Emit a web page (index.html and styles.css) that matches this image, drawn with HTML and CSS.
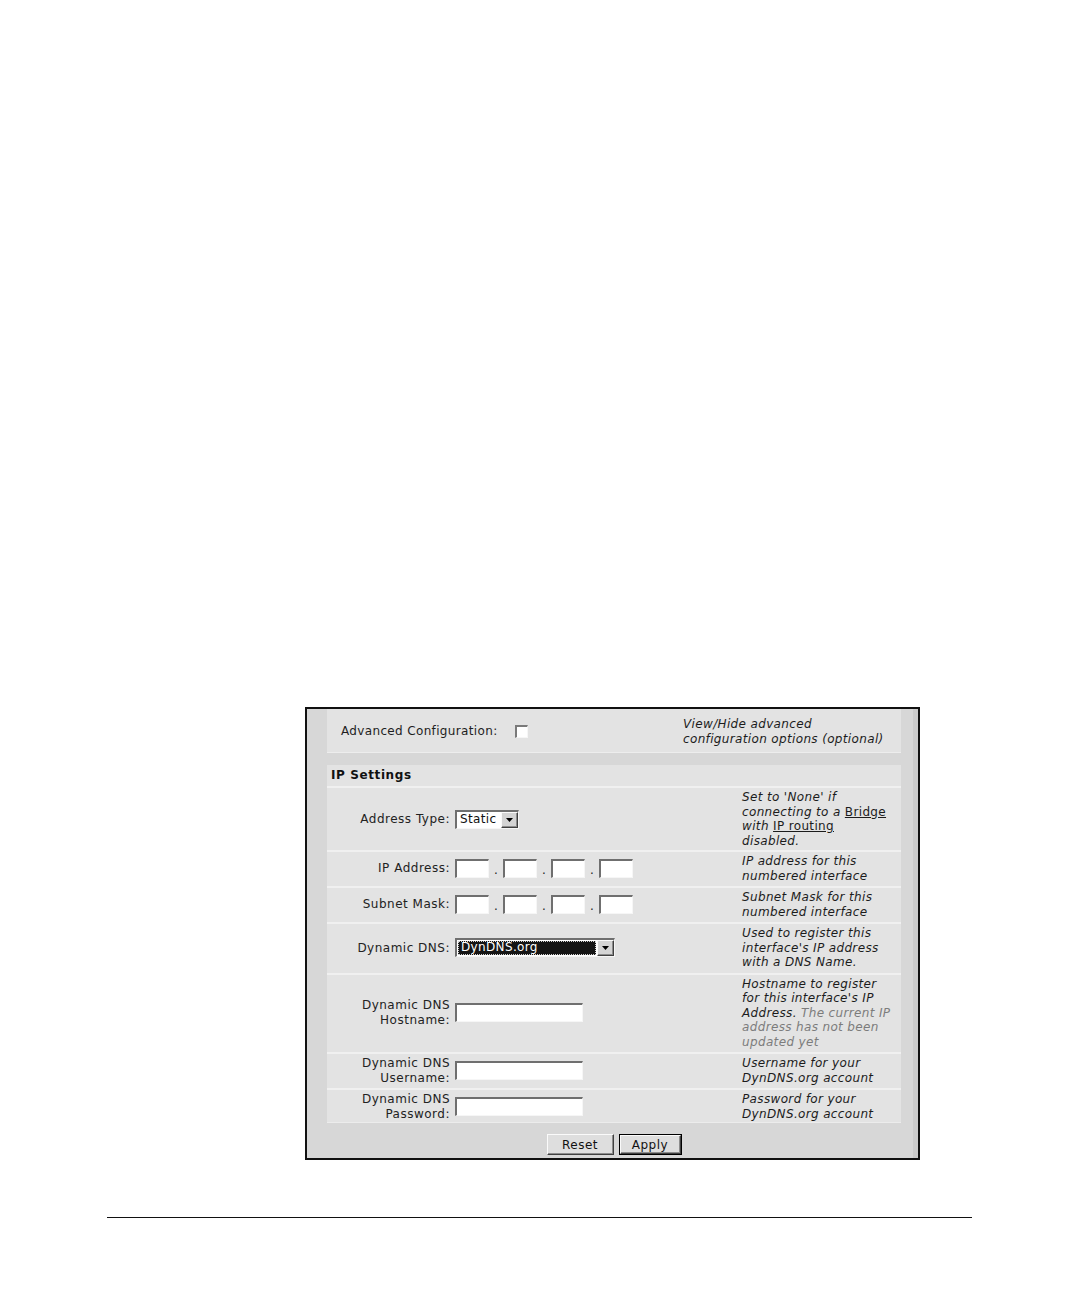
FILE: index.html
```html
<!DOCTYPE html>
<html>
<head>
<meta charset="utf-8">
<link rel="stylesheet" href="styles.css">
</head>
<body>
<div class="page">
  <div class="shot">
    <div class="box adv">
      <div class="adv-left">
        <span>Advanced Configuration:</span>
        <span class="chk"></span>
      </div>
      <div class="desc">View/Hide advanced<br>configuration options (optional)</div>
    </div>

    <div class="box ip">
      <div class="hdr">IP Settings</div>

      <div class="row first">
        <div class="lbl">Address Type:</div>
        <div class="fld">
          <span class="sel sel-at"><span class="sel-val">Static</span><span class="sel-btn"><svg width="7" height="4" viewBox="0 0 7 4"><path d="M0 0h7L3.5 4z" fill="#000"/></svg></span></span>
        </div>
        <div class="desc">Set to 'None' if<br>connecting to a <span class="lnk">Bridge</span><br>with <span class="lnk">IP routing</span><br>disabled.</div>
      </div>

      <div class="row">
        <div class="lbl">IP Address:</div>
        <div class="fld">
          <span class="inp oct"></span><span class="dot">.</span><span class="inp oct"></span><span class="dot">.</span><span class="inp oct"></span><span class="dot">.</span><span class="inp oct"></span>
        </div>
        <div class="desc">IP address for this<br>numbered interface</div>
      </div>

      <div class="row">
        <div class="lbl">Subnet Mask:</div>
        <div class="fld">
          <span class="inp oct"></span><span class="dot">.</span><span class="inp oct"></span><span class="dot">.</span><span class="inp oct"></span><span class="dot">.</span><span class="inp oct"></span>
        </div>
        <div class="desc">Subnet Mask for this<br>numbered interface</div>
      </div>

      <div class="row">
        <div class="lbl">Dynamic DNS:</div>
        <div class="fld">
          <span class="sel sel-dns"><span class="sel-val hl">DynDNS.org</span><span class="sel-btn"><svg width="7" height="4" viewBox="0 0 7 4"><path d="M0 0h7L3.5 4z" fill="#000"/></svg></span></span>
        </div>
        <div class="desc">Used to register this<br>interface's IP address<br>with a DNS Name.</div>
      </div>

      <div class="row">
        <div class="lbl">Dynamic DNS<br>Hostname:</div>
        <div class="fld"><span class="inp txt"></span></div>
        <div class="desc">Hostname to register<br>for this interface's IP<br>Address. <span class="muted">The current IP<br>address has not been<br>updated yet</span></div>
      </div>

      <div class="row">
        <div class="lbl">Dynamic DNS<br>Username:</div>
        <div class="fld"><span class="inp txt"></span></div>
        <div class="desc">Username for your<br>DynDNS.org account</div>
      </div>

      <div class="row last">
        <div class="lbl">Dynamic DNS<br>Password:</div>
        <div class="fld"><span class="inp txt"></span></div>
        <div class="desc">Password for your<br>DynDNS.org account</div>
      </div>
    </div>

    <div class="actions">
      <button class="btn reset">Reset</button>
      <button class="btn apply"><span class="btn-in">Apply</span></button>
    </div>
  </div>
  <div class="rule"></div>
</div>
</body>
</html>
```

FILE: styles.css
```css
* { box-sizing: border-box; }

body {
  margin: 0;
  background: #fff;
  font-family: "DejaVu Sans", Verdana, sans-serif;
  font-size: 12px;
  letter-spacing: 0.35px;
  color: #1e1e1e;
}

.page {
  padding-top: 707px;
  height: 1296px;
  overflow: hidden;
}

.shot {
  margin-left: 305px;
  width: 615px;
  height: 453px;
  border: 2px solid #111;
  background: linear-gradient(to left, #cbcbcb 5px, #d7d7d7 5px);
  padding: 0 17px 0 20px;
  display: flex;
  flex-direction: column;
}

.box {
  background: #e3e3e3;
}

.adv {
  height: 44px;
  padding-top: 2px;
  border-bottom: 1px solid #ededed;
  display: grid;
  grid-template-columns: 356px 1fr;
  align-items: center;
  line-height: 14.5px;
}

.adv-left {
  padding-left: 14px;
  display: flex;
  align-items: center;
}

.chk {
  display: inline-block;
  width: 13px;
  height: 13px;
  margin-left: 17px;
  background: #fff;
  border-top: 2px solid #7a7a7a;
  border-left: 2px solid #7a7a7a;
  border-right: 1px solid #f6f6f6;
  border-bottom: 1px solid #f6f6f6;
}

.ip {
  margin-top: 12px;
  border-bottom: 1px solid #ececec;
}

.hdr {
  height: 21px;
  line-height: 21px;
  padding-left: 4px;
  font-weight: bold;
  letter-spacing: 0.6px;
  color: #111;
}

.row {
  display: grid;
  grid-template-columns: 128px 287px 159px;
  align-items: center;
  border-top: 2px solid #f0f0f0;
  padding: 2px 0 3px;
  line-height: 14.5px;
}

.row.first { padding-bottom: 2px; }
.row.last { padding-bottom: 1px; }

.lbl {
  text-align: right;
  padding-right: 5px;
  letter-spacing: 0.5px;
  color: #222;
}

.fld {
  display: flex;
  align-items: center;
}

.desc {
  font-style: italic;
  white-space: nowrap;
  color: #1c1c1c;
}

.lnk {
  font-style: normal;
  text-decoration: underline;
}

.muted {
  color: #7c7c7c;
}

.inp,
.sel {
  display: inline-flex;
  background: #fff;
  border-top: 2px solid #6f6f6f;
  border-left: 2px solid #6f6f6f;
  border-right: 1px solid #f6f6f6;
  border-bottom: 1px solid #f6f6f6;
}

.oct {
  width: 34px;
  height: 19px;
}

.dot {
  width: 14px;
  text-align: center;
  align-self: flex-end;
  line-height: 16px;
}

.txt {
  width: 128px;
  height: 19px;
}

.sel {
  height: 19px;
  align-items: stretch;
}

.sel-at { width: 64px; }
.sel-dns { width: 160px; }

.sel-val {
  flex: 1;
  padding-left: 3px;
  line-height: 15px;
  color: #111;
}

.sel-val.hl {
  background: #151515;
  color: #fff;
  margin: 1px;
  outline: 1px dotted #d0d0d0;
  outline-offset: -1px;
  line-height: 13px;
  padding-left: 3px;
}

.sel-btn {
  width: 17px;
  background: #d4d4d4;
  border-top: 1px solid #fafafa;
  border-left: 1px solid #fafafa;
  border-right: 1px solid #404040;
  border-bottom: 1px solid #404040;
  box-shadow: inset -1px -1px 0 #8c8c8c;
  display: flex;
  align-items: center;
  justify-content: center;
}

.actions {
  margin-top: 11px;
  display: flex;
  justify-content: center;
  gap: 5px;
}

.btn {
  height: 21px;
  padding: 0;
  font-family: inherit;
  font-size: 12px;
  letter-spacing: 0.5px;
  color: #111;
  background: #dedede;
  border: 1px solid;
  border-color: #fafafa #404040 #404040 #fafafa;
  box-shadow: inset -1px -1px 0 #8c8c8c;
}

.reset { width: 67px; }

.apply {
  width: 63px;
  border: 1px solid #000;
  box-shadow: none;
  display: flex;
  align-items: stretch;
}

.btn-in {
  flex: 1;
  display: flex;
  align-items: center;
  justify-content: center;
  border: 1px solid;
  border-color: #fafafa #404040 #404040 #fafafa;
  box-shadow: inset -1px -1px 0 #8c8c8c;
}

.rule {
  margin: 57px 0 0 107px;
  width: 865px;
  height: 1px;
  background: #111;
}
```
